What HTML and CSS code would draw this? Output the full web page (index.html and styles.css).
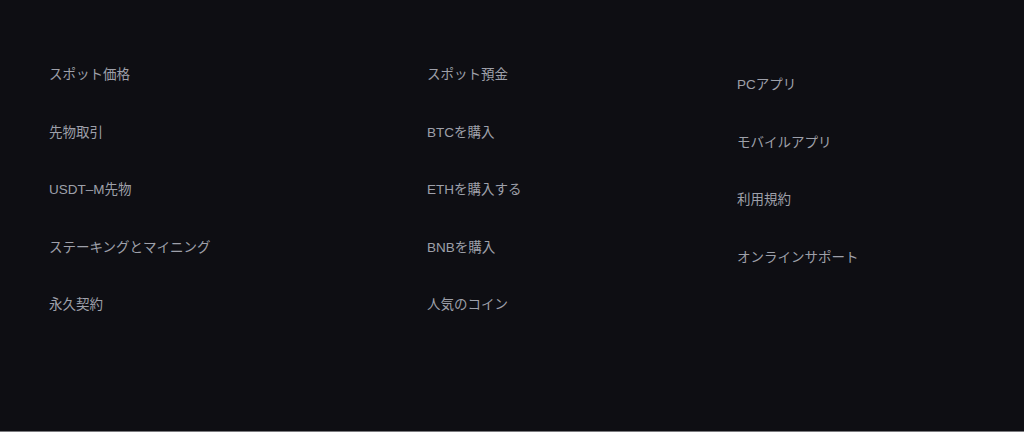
FILE: index.html
```html
<!DOCTYPE html>
<html lang="ja">
<head>
<meta charset="utf-8">
<link rel="stylesheet" href="styles.css">
</head>
<body>
<div class="page">
  <div class="cols">
    <ul class="col col1">
      <li>スポット価格</li>
      <li>先物取引</li>
      <li>USDT–M先物</li>
      <li>ステーキングとマイニング</li>
      <li>永久契約</li>
    </ul>
    <ul class="col col2">
      <li>スポット預金</li>
      <li>BTCを購入</li>
      <li>ETHを購入する</li>
      <li>BNBを購入</li>
      <li>人気のコイン</li>
    </ul>
    <ul class="col col3">
      <li>PCアプリ</li>
      <li>モバイルアプリ</li>
      <li>利用規約</li>
      <li>オンラインサポート</li>
    </ul>
  </div>
</div>
<div class="bottom-line"></div>
</body>
</html>
```
FILE: styles.css
```css
html, body {
  margin: 0;
  padding: 0;
  background: #0e0e13;
}
body {
  width: 1024px;
  height: 432px;
  overflow: hidden;
  display: flex;
  flex-direction: column;
  font-family: "Liberation Sans", "Noto Sans CJK JP", sans-serif;
}
.page {
  flex: 1;
  padding: 65px 0 0 49px;
}
.cols {
  display: flex;
}
.col {
  list-style: none;
  margin: 0;
  padding: 0;
  display: flex;
  flex-direction: column;
  gap: 37.5px;
}
.col li {
  font-size: 13.5px;
  line-height: 20px;
  height: 20px;
  color: #9ea0aa;
  white-space: nowrap;
}
.col1 { width: 378px; }
.col2 { width: 310px; }
.col3 { padding-top: 10px; }
.bottom-line {
  height: 1px;
  background: #7a7a7e;
}
```
